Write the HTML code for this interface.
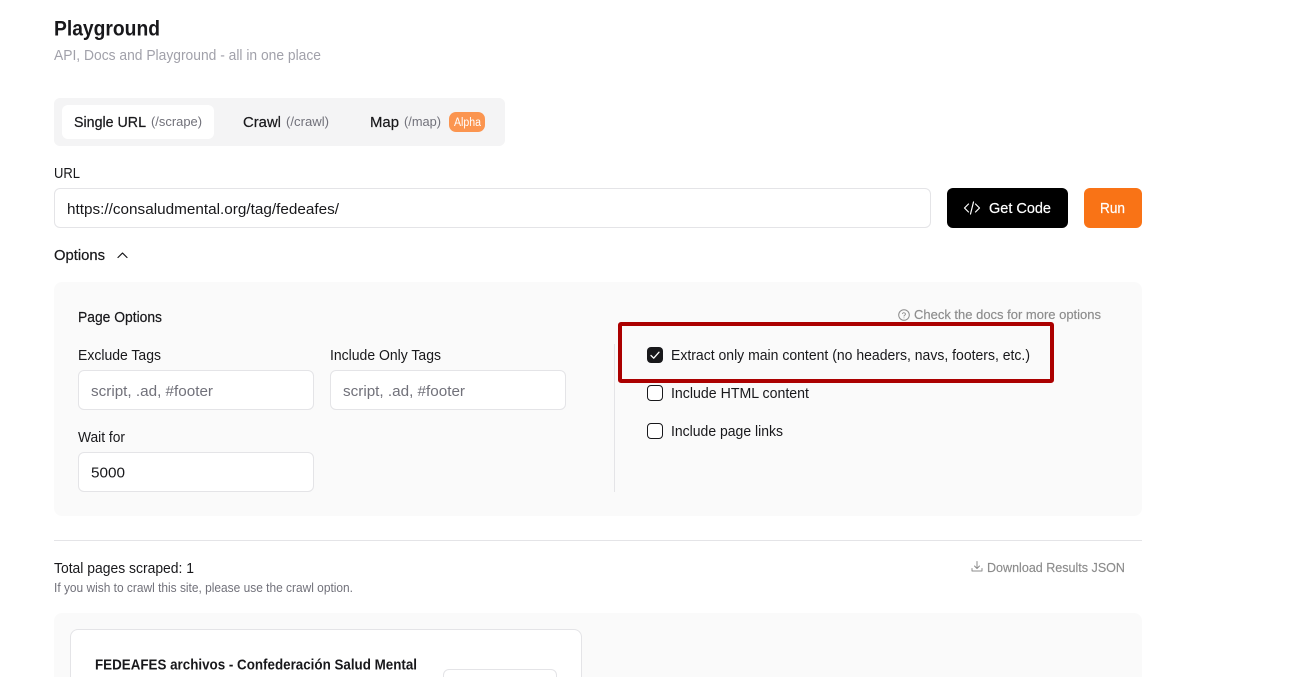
<!DOCTYPE html>
<html lang="en">
<head>
<meta charset="utf-8">
<title>Playground</title>
<style>
html,body{margin:0;padding:0;background:#fff;}
#p{position:relative;width:1308px;height:677px;overflow:hidden;background:#fff;font-family:"Liberation Sans",sans-serif;}
#p div{position:absolute;box-sizing:border-box;}
.i{background:#fff;border:1px solid #e4e4e7;border-radius:6px;}
svg.t{position:absolute;left:0;top:0;}
text{font-family:"Liberation Sans",sans-serif;font-size:14.8px;fill:#18181b;}
.m{stroke:#18181b;stroke-width:.2px;}
.s{font-size:12.7px;fill:#71717a;}
.g{font-size:12.7px;fill:#8c8c8c;stroke:#8c8c8c;stroke-width:.15px;}
</style>
</head>
<body>
<div id="p">
  <div style="left:54px;top:98px;width:451px;height:48px;background:#f4f4f5;border-radius:6px"></div>
  <div style="left:62px;top:105px;width:152px;height:34px;background:#fff;border-radius:6px"></div>
  <div style="left:449px;top:112px;width:36px;height:20px;background:#fb9550;border-radius:7px"></div>
  <div class="i" style="left:54px;top:188px;width:877px;height:40px"></div>
  <div style="left:947px;top:188px;width:121px;height:40px;background:#000;border-radius:6px"></div>
  <div style="left:1084px;top:188px;width:58px;height:40px;background:#f97316;border-radius:6px"></div>
  <div style="left:54px;top:282px;width:1088px;height:234px;background:#fafafa;border-radius:8px"></div>
  <div class="i" style="left:78px;top:370px;width:236px;height:40px"></div>
  <div class="i" style="left:330px;top:370px;width:236px;height:40px"></div>
  <div class="i" style="left:78px;top:452px;width:236px;height:40px"></div>
  <div style="left:614px;top:344px;width:1px;height:148px;background:#e4e4e7"></div>
  <div style="left:647px;top:347px;width:16px;height:16px;background:#18181b;border-radius:4px"></div>
  <div style="left:647px;top:385px;width:16px;height:16px;border:1px solid #18181b;border-radius:4px;background:#fff"></div>
  <div style="left:647px;top:423px;width:16px;height:16px;border:1px solid #18181b;border-radius:4px;background:#fff"></div>
  <div style="left:618px;top:322px;width:436px;height:61px;border:4px solid #ab0000;border-radius:3px"></div>
  <div style="left:54px;top:540px;width:1088px;height:1px;background:#e4e4e7"></div>
  <div style="left:54px;top:613px;width:1088px;height:80px;background:#fafafa;border-radius:8px"></div>
  <div style="left:70px;top:629px;width:512px;height:70px;background:#fff;border:1px solid #e4e4e7;border-radius:8px"></div>
  <div class="i" style="left:443px;top:669px;width:114px;height:30px"></div>

  <svg class="t" width="1308" height="677" viewBox="0 0 1308 677" xmlns="http://www.w3.org/2000/svg">
    <text x="54" y="35.500" textLength="106" lengthAdjust="spacingAndGlyphs" style="font-size:21px;font-weight:700">Playground</text>
    <text x="54" y="60" textLength="267" lengthAdjust="spacingAndGlyphs" style="fill:#a1a1aa">API, Docs and Playground - all in one place</text>

    <text class="m" x="74" y="127" textLength="72" lengthAdjust="spacingAndGlyphs">Single URL</text>
    <text class="s" x="151" y="126" textLength="51" lengthAdjust="spacingAndGlyphs">(/scrape)</text>
    <text class="m" x="243" y="127" textLength="38" lengthAdjust="spacingAndGlyphs">Crawl</text>
    <text class="s" x="286" y="126" textLength="43" lengthAdjust="spacingAndGlyphs">(/crawl)</text>
    <text class="m" x="370" y="127" textLength="29" lengthAdjust="spacingAndGlyphs">Map</text>
    <text class="s" x="404" y="126" textLength="37" lengthAdjust="spacingAndGlyphs">(/map)</text>
    <text x="454" y="126" textLength="27" lengthAdjust="spacingAndGlyphs" style="font-size:11.5px;fill:#fff">Alpha</text>

    <text x="54" y="178" textLength="26" lengthAdjust="spacingAndGlyphs">URL</text>
    <text x="67" y="214" textLength="272" lengthAdjust="spacingAndGlyphs">https://consaludmental.org/tag/fedeafes/</text>

    <path d="M968.500 204l-4 4 4 4M975.500 204l4 4-4 4M973.500 202l-3 12" fill="none" stroke="#fff" stroke-width="1.200" stroke-linecap="round" stroke-linejoin="round"/>
    <text x="989" y="213" textLength="62" lengthAdjust="spacingAndGlyphs" style="fill:#fff;stroke:#fff;stroke-width:.2px">Get Code</text>
    <text x="1100" y="213" textLength="25" lengthAdjust="spacingAndGlyphs" style="fill:#fff;stroke:#fff;stroke-width:.2px">Run</text>

    <text class="m" x="54" y="260" textLength="51" lengthAdjust="spacingAndGlyphs">Options</text>
    <path d="M118 257.500l4.500-4.500 4.500 4.500" fill="none" stroke="#18181b" stroke-width="1.200" stroke-linecap="round" stroke-linejoin="round"/>

    <text class="m" x="78" y="322" textLength="84" lengthAdjust="spacingAndGlyphs">Page Options</text>
    <circle cx="904" cy="315" r="5.300" fill="none" stroke="#8c8c8c" stroke-width="1"/>
    <path d="M902.500 313.600a1.600 1.600 0 0 1 3 .5c0 1-1.500 1.300-1.500 2M904 317.800v.1" fill="none" stroke="#8c8c8c" stroke-width=".9" stroke-linecap="round"/>
    <text class="g" x="914" y="319" textLength="187" lengthAdjust="spacingAndGlyphs">Check the docs for more options</text>

    <text x="78" y="360" textLength="83" lengthAdjust="spacingAndGlyphs">Exclude Tags</text>
    <text x="330" y="360" textLength="111" lengthAdjust="spacingAndGlyphs">Include Only Tags</text>
    <text x="91" y="396" textLength="122" lengthAdjust="spacingAndGlyphs" style="fill:#71717a">script, .ad, #footer</text>
    <text x="343" y="396" textLength="122" lengthAdjust="spacingAndGlyphs" style="fill:#71717a">script, .ad, #footer</text>
    <text x="78" y="442" textLength="47" lengthAdjust="spacingAndGlyphs">Wait for</text>
    <text x="91" y="477.500" textLength="34" lengthAdjust="spacingAndGlyphs">5000</text>

    <path d="M651 355.500l2.700 2.700 5.300-6" fill="none" stroke="#fff" stroke-width="1.300" stroke-linecap="round" stroke-linejoin="round"/>
    <text x="671" y="360" textLength="359" lengthAdjust="spacingAndGlyphs">Extract only main content (no headers, navs, footers, etc.)</text>
    <text x="671" y="398" textLength="138" lengthAdjust="spacingAndGlyphs">Include HTML content</text>
    <text x="671" y="436" textLength="112" lengthAdjust="spacingAndGlyphs">Include page links</text>

    <text x="54" y="573" textLength="140" lengthAdjust="spacingAndGlyphs">Total pages scraped: 1</text>
    <text class="s" x="54" y="592" textLength="299" lengthAdjust="spacingAndGlyphs">If you wish to crawl this site, please use the crawl option.</text>
    <path d="M977 561.500v7M974.500 566l2.500 2.500 2.500-2.500M972 568.500v2.500h10v-2.500" fill="none" stroke="#8c8c8c" stroke-width="1" stroke-linecap="round" stroke-linejoin="round"/>
    <text class="g" x="987" y="572" textLength="138" lengthAdjust="spacingAndGlyphs">Download Results JSON</text>

    <text x="95" y="669.500" textLength="322" lengthAdjust="spacingAndGlyphs" style="font-weight:700">FEDEAFES archivos - Confederación Salud Mental</text>
  </svg>
</div>
</body>
</html>
